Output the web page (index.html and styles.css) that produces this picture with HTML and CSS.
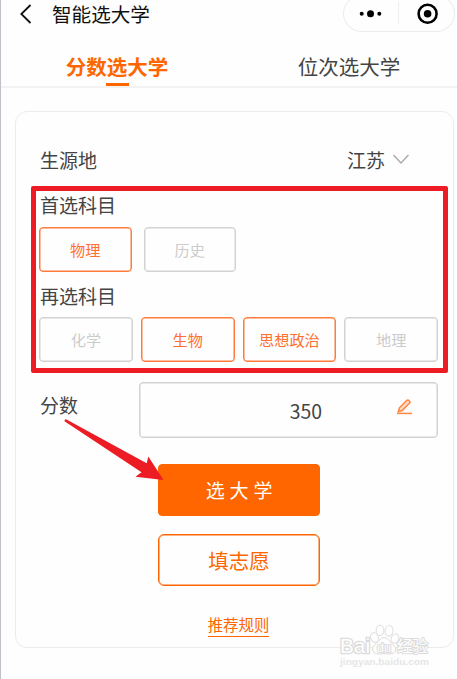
FILE: index.html
```html
<!DOCTYPE html>
<html lang="zh-CN">
<head>
<meta charset="utf-8">
<title>智能选大学</title>
<link rel="stylesheet" href="styles.css">
</head>
<body>
<div class="page">
  <header class="topbar">
    <svg class="back" width="14" height="20" viewBox="0 0 14 20"><path d="M11.500 1 2.300 10l9.200 9"/></svg>
    <h1 class="title">智能选大学</h1>
    <div class="capsule">
      <svg width="112" height="37" viewBox="0 0 112 37">
        <circle cx="18.700" cy="18.700" r="2"/><circle cx="27.500" cy="18.700" r="3.500"/><circle cx="36.300" cy="18.700" r="2"/>
        <path class="split" d="M55.500 7v22"/>
        <circle class="ring" cx="84.600" cy="18.700" r="9"/><circle cx="84.600" cy="18.700" r="3.800"/>
      </svg>
    </div>
  </header>
  <nav class="tabs">
    <div class="tab active">分数选大学</div>
    <div class="tab">位次选大学</div>
  </nav>
  <main class="card">
    <div class="origin">
      <span class="label">生源地</span>
      <span class="province">江苏
        <svg width="18" height="11" viewBox="0 0 18 11"><path d="M1.500 1 9 9l7.500-8"/></svg>
      </span>
    </div>
    <div class="label first">首选科目</div>
    <div class="chips pair">
      <div class="chip on">物理</div>
      <div class="chip">历史</div>
    </div>
    <div class="label second">再选科目</div>
    <div class="chips">
      <div class="chip">化学</div>
      <div class="chip on">生物</div>
      <div class="chip on">思想政治</div>
      <div class="chip">地理</div>
    </div>
    <div class="score">
      <span class="label">分数</span>
      <div class="field">
        <span class="value">350</span>
        <svg class="pencil" width="17" height="16" viewBox="0 0 17 16"><path d="M1 14.400h15"/><path class="pen" d="M2.300 12.700 3.400 8.800 10.800 1.300q1-.8 2 .1l.8.8q.8 1 0 1.900L6.200 11.500z"/></svg>
      </div>
    </div>
    <div class="btn primary">选大学</div>
    <div class="btn outline">填志愿</div>
    <div class="rules"><span>推荐规则</span></div>
  </main>
  <div class="highlight"></div>
  <svg class="arrow" width="101" height="64" viewBox="0 0 101 64"><path d="M3.500 1.400Q1.300 1 1.500 3.200L78.500 54.300 72.500 58.700 100.500 62 85.300 38.500 83.700 45.200z"/></svg>
  <svg class="watermark" width="96" height="50" viewBox="0 0 96 50">
    <g class="outline-art">
      <text x="3" y="33.500" class="brand" textLength="30" lengthAdjust="spacingAndGlyphs">Bai</text>
      <ellipse cx="37.500" cy="18.500" rx="3.800" ry="4.900" transform="rotate(-15 37.500 18.500)"/>
      <ellipse cx="43" cy="11.500" rx="3.900" ry="5.200"/>
      <ellipse cx="52" cy="11.800" rx="3.900" ry="5.200" transform="rotate(10 52 11.800)"/>
      <ellipse cx="58" cy="19.500" rx="3.800" ry="4.700" transform="rotate(20 58 19.500)"/>
      <path d="M47 18.500q3.500 0 6 4 1 1.500 3.500 3.500 3 2.500 2 5.800-1.500 3.500-5.500 3.200-6-.6-12 0-4.500 0-5.500-4-.5-3 2.500-5.500 2.500-2 4-4 2-3 5-3z"/>
      <text x="40" y="33" class="du" textLength="14" lengthAdjust="spacingAndGlyphs">du</text>
      <text x="60" y="33" class="exp" textLength="31">经验</text>
    </g>
    <text x="3" y="45.500" class="url" textLength="89" lengthAdjust="spacingAndGlyphs">jingyan.baidu.com</text>
  </svg>
</div>
</body>
</html>
```

FILE: styles.css
```css
* { box-sizing: border-box; }
body {
  margin: 0;
  background: #fefefe;
  color: #444;
  font-family: "Noto Sans CJK SC", sans-serif;
}
.page {
  position: relative;
  height: 679px;
  overflow: hidden;
  border-left: 1px solid #bfc2c9;
}
svg { display: block; fill: none; }

.topbar {
  display: flex;
  align-items: center;
  height: 27px;
  padding: 0 2px 0 18px;
}
.back { stroke: #111; stroke-width: 1.8; }
.title {
  margin: 0 auto 0 19px;
  font-size: 19.6px;
  font-weight: 400;
  line-height: 27px;
  color: #111;
}
.capsule {
  flex: none;
  width: 112px;
  height: 37px;
  border-radius: 19px;
  box-shadow: inset 0 0 0 1px #ebebeb;
}
.capsule circle { fill: #000; }
.capsule .ring { fill: none; stroke: #000; stroke-width: 2.6; }
.capsule .split { stroke: #eee; }

.tabs {
  display: flex;
  height: 61px;
  border-bottom: 2px solid #f2f2f2;
}
.tab {
  flex: none;
  width: 232px;
  height: 60px;
  padding-top: 24px;
  text-align: center;
  font-size: 20.5px;
  line-height: 31px;
}
.tab.active { color: #ff6600; font-weight: 700; }
.tab.active::after {
  content: "";
  display: block;
  width: 23px;
  height: 3px;
  margin: 1px auto 0;
  background: #ff6600;
}

.card {
  height: 537px;
  margin: 23px 3px 0 14px;
  padding: 27px 15px 0 23px;
  border: 1px solid #ececec;
  border-radius: 12px;
}
.label { padding-left: 1px; font-size: 19px; line-height: 42px; }
.origin { display: flex; justify-content: space-between; }
.province {
  display: flex;
  align-items: center;
  gap: 7px;
  height: 41px;
  padding-right: 28px;
  font-size: 19px;
}
.province svg { stroke: #aaa; stroke-width: 1.4; }
.label.first { height: 46px; line-height: 48px; }
.label.second { height: 45px; line-height: 47px; }
.chips { display: flex; gap: 8px; }
.chips.pair { gap: 12px; }
.chip {
  flex: 1;
  height: 45px;
  border: 1px solid #d2d2d2;
  border-radius: 4px;
  text-align: center;
  font-size: 15.2px;
  line-height: 42px;
  color: #ccc;
  box-shadow: inset 0 0 0 0.5px #d2d2d2;
}
.pair .chip { flex: 0 0 92.5px; }
.chip.on { border-color: #ff7a3c; color: #ff7030; box-shadow: inset 0 0 0 0.5px #ff7a3c; }

.score {
  display: flex;
  justify-content: space-between;
  margin-top: 20px;
}
.score .label { line-height: 46px; }
.field {
  display: flex;
  align-items: center;
  justify-content: flex-end;
  width: 299px;
  height: 56px;
  padding-right: 24px;
  border: 1px solid #d2d2d2;
  border-radius: 4px;
  box-shadow: inset 0 0 0 0.5px #d2d2d2;
}
.value { margin-right: 74px; font-size: 19.4px; line-height: 54px; padding-top: 2px; }
.pencil { margin-bottom: 6px; stroke: #ff8540; stroke-width: 1.5; }
.pencil .pen { stroke-width: 1.5; fill: #ffd9c2; }

.btn {
  width: 162px;
  height: 52px;
  margin: 18px 0 0 119px;
  border: 1.5px solid #ff6600;
  border-radius: 6px;
  text-align: center;
  font-size: 20.5px;
  line-height: 50px;
  color: #ff6600;
  box-shadow: inset 0 0 0 0.5px #ff6600;
}
.btn.primary {
  margin-top: 26px;
  border-radius: 4px;
  background: #ff6600;
  color: #fff;
  font-size: 19px;
  letter-spacing: 4.8px;
  padding-left: 5px;
}
.rules { margin-top: 28px; text-align: center; font-size: 15.4px; line-height: 20px; color: #ff6600; }
.rules span {
  display: inline-block;
  height: 22px;
  line-height: 19px;
  border-bottom: 1px solid #ff6600;
}

/* Annotations laid over the form */
.highlight {
  position: absolute;
  left: 30px;
  top: 186px;
  width: 417px;
  height: 187px;
  border: 5px solid #ed1c24;
  border-radius: 2px;
}
.arrow { position: absolute; left: 62px; top: 418px; fill: #ed1c24; }
.watermark { position: absolute; left: 336px; top: 619px; font-family: "Liberation Sans", sans-serif; }
.outline-art { fill: #fefefe; stroke: #dcdcdc; stroke-width: 1; }
.brand { font-size: 20px; font-weight: 400; paint-order: stroke; stroke-width: 2.6; }
.du { font-size: 12px; font-weight: 400; paint-order: stroke; stroke-width: 2; }
.exp { font-size: 16px; font-weight: 400; font-family: "Noto Sans CJK SC", sans-serif; paint-order: stroke; stroke-width: 2; }
.url { font-size: 9.5px; font-weight: 700; fill: #e6e6e6; }
```
